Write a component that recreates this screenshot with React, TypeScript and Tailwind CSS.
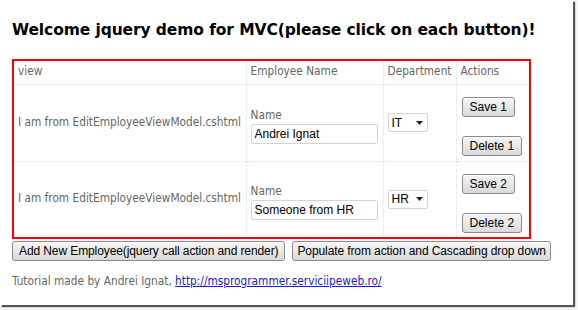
import React from "react";

const rows = [
  { id: 1, name: "Andrei Ignat", dept: "IT" },
  { id: 2, name: "Someone from HR", dept: "HR" },
];

const btn =
  "whitespace-nowrap rounded-[3px] border border-[#8a8a8a] bg-gradient-to-b from-[#f6f6f6] to-[#d9d9d9] h-[20px] text-[12px] leading-none text-black shadow-[inset_0_1px_0_#fff]";

const App: React.FC = () => {
  return (
    <div className="h-[310px] w-[578px] bg-[#f4f4f4]">
      {/* Screenshot frame with shadow */}
      <div className="h-[305px] w-[573px] bg-white shadow-[2px_2px_1px_#555] [font-family:'DejaVu_Sans_Condensed','Noto_Sans',sans-serif]">
        <div className="px-[12px] pt-[20px]">
          <h1 className="text-[15.5px] font-bold leading-[20px] tracking-[-0.1px] text-black [font-family:'DejaVu_Sans',Verdana,sans-serif]">
            Welcome jquery demo for MVC(please click on each button)!
          </h1>

          {/* Red highlighted table */}
          <div className="mt-[19px] w-[519px] border-2 border-[#ff0000]">
            <table className="w-full border-collapse whitespace-nowrap text-[11.75px] text-[#666]">
              <thead>
                <tr className="h-[23px] border-b border-dotted border-[#d6e2ec]">
                  <th className="w-[232px] border-r border-dotted border-[#d6e2ec] pl-[4px] text-left font-normal">
                    view
                  </th>
                  <th className="w-[137px] border-r border-dotted border-[#d6e2ec] pl-[4px] text-left font-normal">
                    Employee Name
                  </th>
                  <th className="w-[73px] border-r border-dotted border-[#d6e2ec] pl-[4px] text-left font-normal">
                    Department
                  </th>
                  <th className="pl-[4px] text-left font-normal">Actions</th>
                </tr>
              </thead>
              <tbody>
                {rows.map((r, i) => (
                  <tr
                    key={r.id}
                    className={
                      i === 0
                        ? "h-[77px] border-b border-dotted border-[#d6e2ec]"
                        : "h-[76px]"
                    }
                  >
                    <td className="border-r border-dotted border-[#d6e2ec] pl-[4px]">
                      I am from EditEmployeeViewModel.cshtml
                    </td>
                    <td className="border-r border-dotted border-[#d6e2ec] pl-[4px]">
                      <div className="mt-[6px] leading-[14px]">Name</div>
                      <div className="mt-[2px] flex h-[20px] w-[127px] items-center rounded-[2px] border border-[#d4d4d4] px-[3px] text-[12px] text-black [font-family:'Liberation_Sans',Arial,sans-serif]">
                        {r.name}
                      </div>
                    </td>
                    <td className="border-r border-dotted border-[#d6e2ec] pl-[4px]">
                      <div className="flex h-[19px] w-[40px] items-center justify-between rounded-[2px] border border-[#d4d4d4] pl-[3px] pr-[4px] text-[12px] text-black [font-family:'Liberation_Sans',Arial,sans-serif]">
                        <span>{r.dept}</span>
                        <svg width="7" height="4" viewBox="0 0 7 4">
                          <path d="M0 0h7L3.5 4z" fill="#222" />
                        </svg>
                      </div>
                    </td>
                    <td className="pl-[5px] pt-[8px]">
                      <div className="flex flex-col items-start gap-[19px] [font-family:'Liberation_Sans',Arial,sans-serif]">
                        <button className={`${btn} px-[7px]`}>Save {r.id}</button>
                        <button className={`${btn} px-[7px]`}>Delete {r.id}</button>
                      </div>
                    </td>
                  </tr>
                ))}
              </tbody>
            </table>
          </div>

          {/* Action buttons */}
          <div className="mt-[2px] flex gap-[7px] [font-family:'Liberation_Sans',Arial,sans-serif]">
            <button className={`${btn} px-[6px] tracking-[-0.1px]`}>
              Add New Employee(jquery call action and render)
            </button>
            <button className={`${btn} px-[4px] tracking-[-0.1px]`}>
              Populate from action and Cascading drop down
            </button>
          </div>

          <p className="mt-[12px] text-[11.75px] text-[#666]">
            Tutorial made by Andrei Ignat,{" "}
            <a href="#" className="text-[#1a1ad6] underline">
              http://msprogrammer.serviciipeweb.ro/
            </a>
          </p>
        </div>
      </div>
    </div>
  );
};

export default App;
